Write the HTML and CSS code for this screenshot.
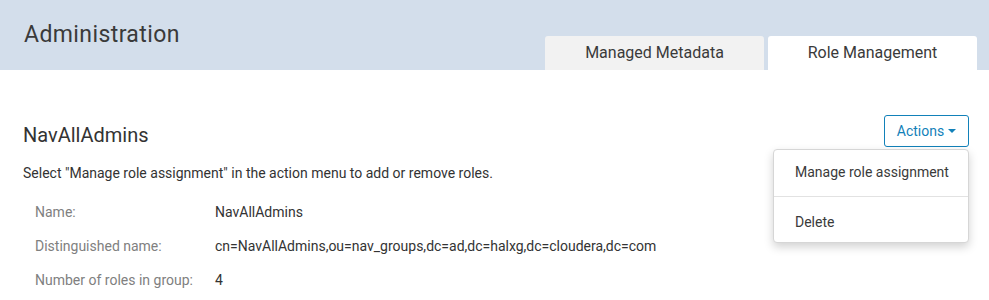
FILE: index.html
```html
<!DOCTYPE html>
<html>
<head>
<meta charset="utf-8">
<link rel="stylesheet" href="styles.css">
</head>
<body>
<header class="topbar">
  <h1 class="title">Administration</h1>
  <nav class="tabs">
    <div class="tab">Managed Metadata</div>
    <div class="tab active">Role Management</div>
  </nav>
</header>
<main class="content">
  <div class="head-row">
    <h2 class="group-name">NavAllAdmins</h2>
    <div class="actions">
      <button class="actions-btn">Actions <span class="caret"></span></button>
      <div class="menu">
        <div class="menu-item">Manage role assignment</div>
        <div class="menu-divider"></div>
        <div class="menu-item last">Delete</div>
      </div>
    </div>
  </div>
  <p class="hint">Select "Manage role assignment" in the action menu to add or remove roles.</p>
  <div class="props">
    <div class="label">Name:</div><div class="value">NavAllAdmins</div>
    <div class="label">Distinguished name:</div><div class="value">cn=NavAllAdmins,ou=nav_groups,dc=ad,dc=halxg,dc=cloudera,dc=com</div>
    <div class="label">Number of roles in group:</div><div class="value">4</div>
  </div>
</main>
</body>
</html>
```
FILE: styles.css
```css
* { box-sizing: border-box; }
body {
  margin: 0;
  font-family: Roboto, "Noto Sans", sans-serif;
  color: #333;
  background: #fff;
}
.topbar {
  height: 70px;
  background: #d3deeb;
  display: flex;
  justify-content: space-between;
  align-items: flex-end;
  padding: 0 12px 0 24px;
}
.title {
  margin: 0;
  align-self: flex-start;
  padding-top: 21px;
  font-size: 23px;
  letter-spacing: 0.4px;
  font-weight: 400;
  color: #3a3a3a;
  line-height: 28px;
}
.tabs {
  display: flex;
  gap: 4px;
}
.tab {
  height: 34px;
  width: 219px;
  background: #f2f2f2;
  border-radius: 3px 3px 0 0;
  font-size: 16px;
  color: #3a3a3a;
  text-align: center;
  line-height: 34px;
}
.tab.active {
  background: #fff;
  width: 209px;
}
.content {
  padding: 0 20px 0 23px;
}
.head-row {
  display: flex;
  justify-content: space-between;
  align-items: flex-start;
  padding-top: 45px;
}
.group-name {
  margin: 0;
  padding-top: 8px;
  font-size: 20px;
  font-weight: 400;
  line-height: 24px;
  color: #333;
}
.actions {
  position: relative;
}
.actions-btn {
  width: 85px;
  height: 32px;
  border: 1px solid #1281b9;
  border-radius: 3px;
  background: #fff;
  color: #1281b9;
  font-family: Roboto, sans-serif;
  font-size: 14px;
  padding: 0;
  display: flex;
  align-items: center;
  justify-content: center;
  gap: 4px;
}
.caret {
  width: 0;
  height: 0;
  border-left: 4px solid transparent;
  border-right: 4px solid transparent;
  border-top: 4px solid #1281b9;
}
.menu {
  position: absolute;
  top: 34px;
  right: 0;
  width: 196px;
  background: #fff;
  border: 1px solid #d6d6d6;
  border-radius: 4px;
  box-shadow: 0 4px 10px rgba(0,0,0,0.18);
}
.menu-item {
  padding-left: 21px;
  height: 46px;
  line-height: 44px;
  font-size: 14px;
  color: #3a3a3a;
}
.menu-item.last {
  height: 45px;
  padding-top: 3px;
}
.menu-divider {
  height: 1px;
  background: #e2e2e2;
}
.hint {
  margin: 16px 0 0;
  font-size: 14px;
  line-height: 20px;
  color: #333;
}
.props {
  display: grid;
  grid-template-columns: 180px 1fr;
  row-gap: 14px;
  padding: 19px 0 0 12px;
  font-size: 14px;
  line-height: 20px;
}
.label { color: #808080; }
.value { color: #333; }
```
